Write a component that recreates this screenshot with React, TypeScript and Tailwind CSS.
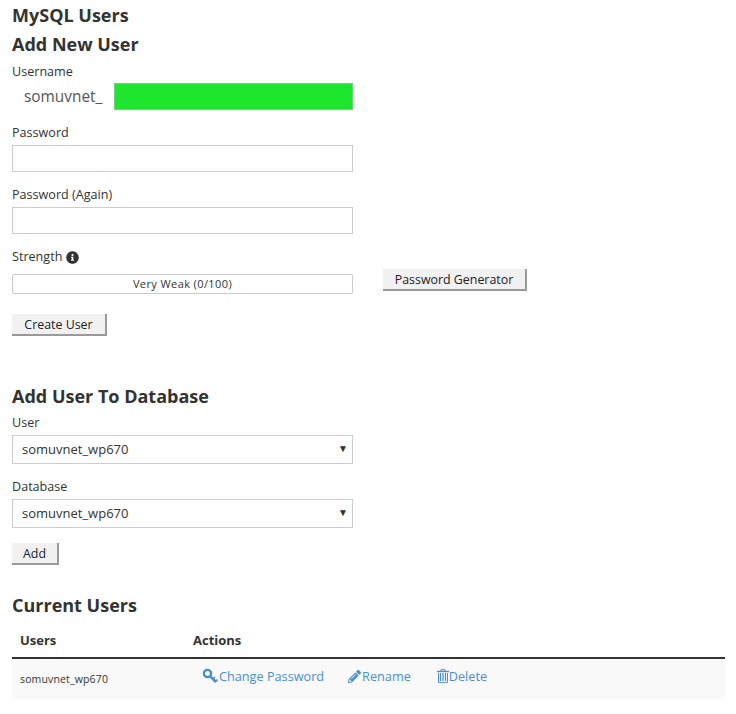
import { FaInfoCircle, FaPencilAlt } from "react-icons/fa"

const font = "font-['Open_Sans','Noto_Sans',sans-serif]"

function Label({ children, className = "" }: { children: React.ReactNode; className?: string }) {
  return <div className={`text-[12.6px] leading-[18px] text-[#333] ${className}`}>{children}</div>
}

function Btn({ children, className = "" }: { children: React.ReactNode; className?: string }) {
  return (
    <button className={`h-[22px] pt-[2px] bg-[#f1f1f1] text-[12.4px] leading-none text-[#222] border-r-2 border-b-2 border-[#9a9a9a] ${className}`}>
      {children}
    </button>
  )
}

function FakeSelect() {
  return (
    <div className="mt-[3px] w-[341px] h-[29px] border border-[#ccc] bg-white flex items-center justify-between pl-[9px] pr-[4px] text-[13px] text-[#333]">
      <span>somuvnet_wp670</span>
      <span className="text-[10px] text-[#333] -translate-y-[1px]">▼</span>
    </div>
  )
}

function KeyIcon() {
  return (
    <svg viewBox="0 0 16 16" className="w-[16px] h-[16px] mr-[1px]" fill="none" stroke="currentColor">
      <circle cx="5.5" cy="5.5" r="3.6" strokeWidth="2.4" />
      <path d="M8.3 8.3 14 14" strokeWidth="2.6" />
      <path d="M11 11 13 9M13.5 13.5 15.5 11.5" strokeWidth="1.6" />
    </svg>
  )
}

function TrashIcon() {
  return (
    <svg viewBox="0 0 12 14" className="w-[12px] h-[14px]" fill="none" stroke="currentColor">
      <path d="M0 2.5h12" strokeWidth="1.4" />
      <path d="M4 2V.7h4V2" strokeWidth="1" />
      <path d="M1.5 4v9.4h9V4" strokeWidth="1" />
      <path d="M3.5 4v8M6 4v8M8.5 4v8" strokeWidth="1.2" />
    </svg>
  )
}

export default function App() {
  return (
    <div className={`${font} w-[736px] h-[714px] bg-white pl-[12px] pr-[11px] overflow-hidden text-[#333]`}>
      <h1 className="pt-[5px] text-[18px] leading-[20px] font-bold">MySQL Users</h1>
      <h2 className="mt-[7px] text-[18px] leading-[24px] font-bold">Add New User</h2>

      <Label className="mt-[7px]">Username</Label>
      <div className="mt-[2px] flex items-center h-[27px]">
        <span className="w-[102px] pl-[12px] text-[15.4px] text-[#555]">somuvnet_</span>
        <div className="w-[239px] h-[27px] bg-[#1ee52e] border border-[#6ed47a]" />
      </div>

      <Label className="mt-[14px]">Password</Label>
      <div className="mt-[3px] w-[341px] h-[27px] border border-[#ccc] bg-white" />

      <Label className="mt-[14px]">Password (Again)</Label>
      <div className="mt-[3px] w-[341px] h-[27px] border border-[#ccc] bg-white" />

      <Label className="mt-[14px] flex items-center gap-[4px]">
        Strength <FaInfoCircle className="w-[13px] h-[13px] text-[#333]" />
      </Label>
      <div className="mt-[3px] flex items-start">
        <div className="mt-[5px] w-[341px] h-[20px] border border-[#ccc] rounded-[2px] bg-white flex items-center justify-center text-[11px] tracking-[0.4px] text-[#333]">
          Very Weak (0/100)
        </div>
        <Btn className="ml-[30px] w-[144px]">Password Generator</Btn>
      </div>

      <Btn className="block mt-[20px] w-[95px]">Create User</Btn>

      <h2 className="mt-[48px] text-[18px] leading-[24px] font-bold">Add User To Database</h2>
      <Label className="mt-[6px]">User</Label>
      <FakeSelect />
      <Label className="mt-[14px]">Database</Label>
      <FakeSelect />
      <Btn className="block mt-[15px] w-[47px]">Add</Btn>

      <h2 className="mt-[28px] text-[18px] leading-[24px] font-bold">Current Users</h2>

      <div className="mt-[4px] flex h-[38px] pt-[4px] items-center border-b-2 border-[#333] text-[13px] font-bold">
        <div className="w-[181px] pl-[8px]">Users</div>
        <div>Actions</div>
      </div>
      <div className="flex h-[40px] bg-[#f9f9f9]">
        <div className="w-[190px] pl-[8px] pt-[13px] text-[10.5px] tracking-[0.15px] leading-[14px] text-[#333]">somuvnet_wp670</div>
        <div className="flex items-start pt-[8px] text-[12.7px] leading-[18px] text-[#4a8fd4]">
          <span className="flex items-center">
            <KeyIcon />
            Change Password
          </span>
          <span className="ml-[24px] flex items-center">
            <FaPencilAlt className="w-[13px] h-[13px] mr-[1px]" />
            Rename
          </span>
          <span className="ml-[26px] flex items-center">
            <TrashIcon />
            Delete
          </span>
        </div>
      </div>
    </div>
  )
}
